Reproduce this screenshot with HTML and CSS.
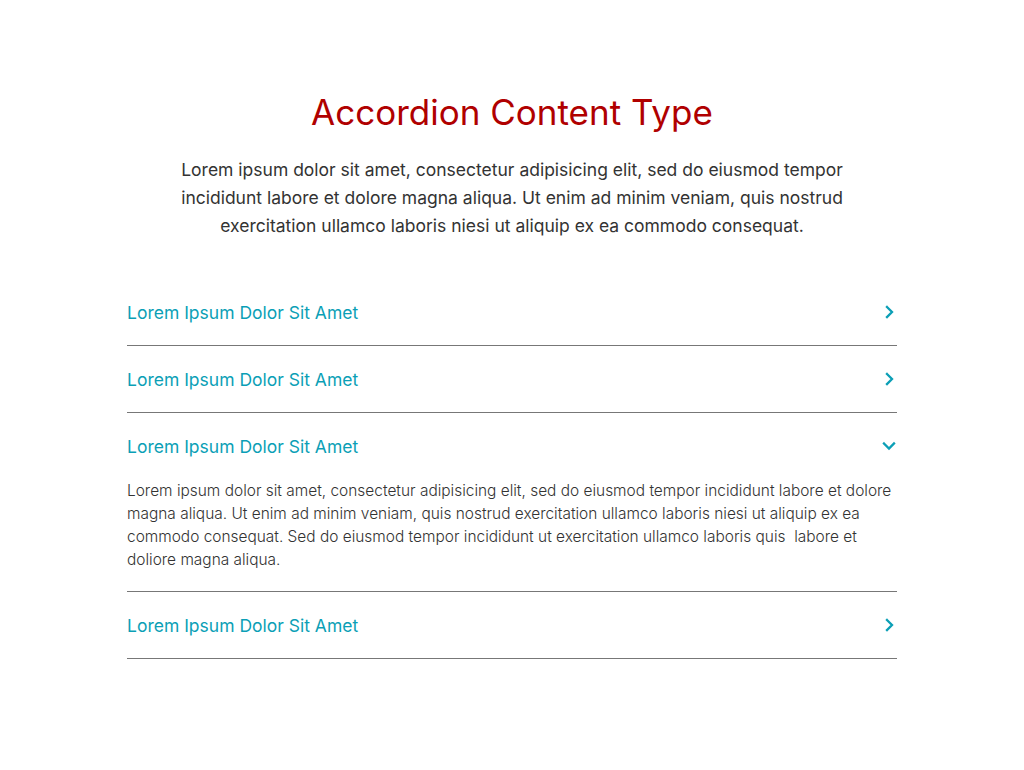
FILE: index.html
```html
<!DOCTYPE html>
<html lang="en">
<head>
<meta charset="utf-8">
<title>Accordion Content Type</title>
<link rel="stylesheet" href="styles.css">
</head>
<body>
<main class="page">
  <h1 class="title">Accordion Content Type</h1>
  <p class="intro">Lorem ipsum dolor sit amet, consectetur adipisicing elit, sed do eiusmod tempor incididunt labore et dolore magna aliqua. Ut enim ad minim veniam, quis nostrud exercitation ullamco laboris niesi ut aliquip ex ea commodo consequat.</p>

  <section class="accordion">
    <div class="item">
      <div class="header">
        <span class="label">Lorem Ipsum Dolor Sit Amet</span>
        <svg class="chev" viewBox="0 0 16 16" width="16" height="16"><polyline points="6,3 11,8 6,13"/></svg>
      </div>
    </div>
    <div class="item">
      <div class="header">
        <span class="label">Lorem Ipsum Dolor Sit Amet</span>
        <svg class="chev" viewBox="0 0 16 16" width="16" height="16"><polyline points="6,3 11,8 6,13"/></svg>
      </div>
    </div>
    <div class="item open">
      <div class="header">
        <span class="label">Lorem Ipsum Dolor Sit Amet</span>
        <svg class="chev" viewBox="0 0 16 16" width="16" height="16"><polyline points="3,5.5 8,10.5 13,5.5"/></svg>
      </div>
      <div class="panel">
        <p>Lorem ipsum dolor sit amet, consectetur adipisicing elit, sed do eiusmod tempor incididunt labore et dolore magna aliqua. Ut enim ad minim veniam, quis nostrud exercitation ullamco laboris niesi ut aliquip ex ea commodo consequat. Sed do eiusmod tempor incididunt ut exercitation ullamco laboris quis&nbsp; labore et doliore magna aliqua.</p>
      </div>
    </div>
    <div class="item">
      <div class="header">
        <span class="label">Lorem Ipsum Dolor Sit Amet</span>
        <svg class="chev" viewBox="0 0 16 16" width="16" height="16"><polyline points="6,3 11,8 6,13"/></svg>
      </div>
    </div>
  </section>
</main>
</body>
</html>
```
FILE: styles.css
```css
html, body {
  margin: 0;
  padding: 0;
  background: #ffffff;
}

body {
  font-family: "Inter", "DejaVu Sans", sans-serif;
  color: #333333;
}

.page {
  padding-top: 91px;
  display: flex;
  flex-direction: column;
  align-items: center;
}

.title {
  margin: 0;
  font-size: 35px;
  line-height: 42px;
  font-weight: 400;
  color: #b00000;
  text-align: center;
}

.intro {
  margin: 23px 0 0;
  max-width: 700px;
  font-size: 17.5px;
  line-height: 28px;
  text-align: center;
  color: #333333;
}

.accordion {
  margin-top: 39px;
  width: 770px;
}

.item {
  border-bottom: 1px solid #777777;
}

.header {
  height: 66px;
  display: flex;
  align-items: center;
  justify-content: space-between;
}

.label {
  font-size: 17.5px;
  color: #0b9fb6;
}

.chev {
  display: block;
  fill: none;
  stroke: #0b9fb6;
  stroke-width: 2.3;
  stroke-linecap: square;
  stroke-linejoin: miter;
}

.panel {
  padding-bottom: 20px;
}

.panel p {
  margin: 0;
  font-size: 15.45px;
  line-height: 23px;
  font-weight: 300;
  color: #333333;
}
```
